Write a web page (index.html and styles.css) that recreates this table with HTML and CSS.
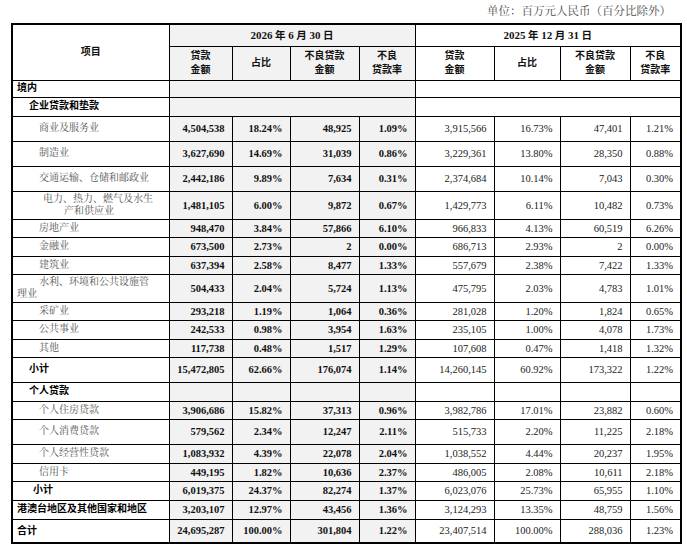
FILE: index.html
```html
<!DOCTYPE html>
<html lang="zh-CN">
<head>
<meta charset="utf-8">
<title>贷款结构</title>
<link rel="stylesheet" href="styles.css">
</head>
<body>
<div class="page">
  <div class="unit">单位：百万元人民币（百分比除外）</div>
  <table class="loans">
    <colgroup>
      <col class="c-item"><col class="c-a"><col class="c-b"><col class="c-c"><col class="c-d">
      <col class="c-e"><col class="c-f"><col class="c-g"><col class="c-h">
    </colgroup>
    <thead>
      <tr class="r-date">
        <th class="hd-item" rowspan="2">项目</th>
        <th class="hd-date cur" colspan="4"><span class="num">2026</span> 年 <span class="num">6</span> 月 <span class="num">30</span> 日</th>
        <th class="hd-date" colspan="4"><span class="num">2025</span> 年 <span class="num">12</span> 月 <span class="num">31</span> 日</th>
      </tr>
      <tr class="r-sub">
        <th class="cur">贷款<br>金额</th>
        <th class="cur">占比</th>
        <th class="cur">不良贷款<br>金额</th>
        <th class="cur">不良<br>贷款率</th>
        <th>贷款<br>金额</th>
        <th>占比</th>
        <th>不良贷款<br>金额</th>
        <th>不良<br>贷款率</th>
      </tr>
    </thead>
    <tbody>
      <tr class="r17"><td class="lab b lv0">境内</td><td class="cur" colspan="4"></td><td colspan="4"></td></tr>
      <tr class="r19"><td class="lab b lv1">企业贷款和垫款</td><td class="cur" colspan="4"></td><td colspan="4"></td></tr>
      <tr class="r25"><td class="lab lv2">商业及服务业</td><td class="n cur">4,504,538</td><td class="n cur">18.24%</td><td class="n cur">48,925</td><td class="n cur">1.09%</td><td class="n">3,915,566</td><td class="n">16.73%</td><td class="n">47,401</td><td class="n">1.21%</td></tr>
      <tr class="r25"><td class="lab lv2">制造业</td><td class="n cur">3,627,690</td><td class="n cur">14.69%</td><td class="n cur">31,039</td><td class="n cur">0.86%</td><td class="n">3,229,361</td><td class="n">13.80%</td><td class="n">28,350</td><td class="n">0.88%</td></tr>
      <tr class="r25"><td class="lab lv2">交通运输、仓储和邮政业</td><td class="n cur">2,442,186</td><td class="n cur">9.89%</td><td class="n cur">7,634</td><td class="n cur">0.31%</td><td class="n">2,374,684</td><td class="n">10.14%</td><td class="n">7,043</td><td class="n">0.30%</td></tr>
      <tr class="r28"><td class="lab two"><span class="ln ind-a">电力、热力、燃气及水生</span><span class="ln ind-b">产和供应业</span></td><td class="n cur">1,481,105</td><td class="n cur">6.00%</td><td class="n cur">9,872</td><td class="n cur">0.67%</td><td class="n">1,429,773</td><td class="n">6.11%</td><td class="n">10,482</td><td class="n">0.73%</td></tr>
      <tr class="r18"><td class="lab lv2">房地产业</td><td class="n cur">948,470</td><td class="n cur">3.84%</td><td class="n cur">57,866</td><td class="n cur">6.10%</td><td class="n">966,833</td><td class="n">4.13%</td><td class="n">60,519</td><td class="n">6.26%</td></tr>
      <tr class="r19"><td class="lab lv2">金融业</td><td class="n cur">673,500</td><td class="n cur">2.73%</td><td class="n cur">2</td><td class="n cur">0.00%</td><td class="n">686,713</td><td class="n">2.93%</td><td class="n">2</td><td class="n">0.00%</td></tr>
      <tr class="r18"><td class="lab lv2">建筑业</td><td class="n cur">637,394</td><td class="n cur">2.58%</td><td class="n cur">8,477</td><td class="n cur">1.33%</td><td class="n">557,679</td><td class="n">2.38%</td><td class="n">7,422</td><td class="n">1.33%</td></tr>
      <tr class="r28"><td class="lab two"><span class="ln ind-c">水利、环境和公共设施管</span><span class="ln ind-d">理业</span></td><td class="n cur">504,433</td><td class="n cur">2.04%</td><td class="n cur">5,724</td><td class="n cur">1.13%</td><td class="n">475,795</td><td class="n">2.03%</td><td class="n">4,783</td><td class="n">1.01%</td></tr>
      <tr class="r18"><td class="lab lv2">采矿业</td><td class="n cur">293,218</td><td class="n cur">1.19%</td><td class="n cur">1,064</td><td class="n cur">0.36%</td><td class="n">281,028</td><td class="n">1.20%</td><td class="n">1,824</td><td class="n">0.65%</td></tr>
      <tr class="r19"><td class="lab lv2">公共事业</td><td class="n cur">242,533</td><td class="n cur">0.98%</td><td class="n cur">3,954</td><td class="n cur">1.63%</td><td class="n">235,105</td><td class="n">1.00%</td><td class="n">4,078</td><td class="n">1.73%</td></tr>
      <tr class="r18"><td class="lab lv2">其他</td><td class="n cur">117,738</td><td class="n cur">0.48%</td><td class="n cur">1,517</td><td class="n cur">1.29%</td><td class="n">107,608</td><td class="n">0.47%</td><td class="n">1,418</td><td class="n">1.32%</td></tr>
      <tr class="r25"><td class="lab b lv1">小计</td><td class="n cur">15,472,805</td><td class="n cur">62.66%</td><td class="n cur">176,074</td><td class="n cur">1.14%</td><td class="n">14,260,145</td><td class="n">60.92%</td><td class="n">173,322</td><td class="n">1.22%</td></tr>
      <tr class="r19"><td class="lab b lv1">个人贷款</td><td class="cur"></td><td class="cur"></td><td class="cur"></td><td class="cur"></td><td></td><td></td><td></td><td></td></tr>
      <tr class="r18"><td class="lab lv2">个人住房贷款</td><td class="n cur">3,906,686</td><td class="n cur">15.82%</td><td class="n cur">37,313</td><td class="n cur">0.96%</td><td class="n">3,982,786</td><td class="n">17.01%</td><td class="n">23,882</td><td class="n">0.60%</td></tr>
      <tr class="r25"><td class="lab lv2">个人消费贷款</td><td class="n cur">579,562</td><td class="n cur">2.34%</td><td class="n cur">12,247</td><td class="n cur">2.11%</td><td class="n">515,733</td><td class="n">2.20%</td><td class="n">11,225</td><td class="n">2.18%</td></tr>
      <tr class="r19"><td class="lab lv2">个人经营性贷款</td><td class="n cur">1,083,932</td><td class="n cur">4.39%</td><td class="n cur">22,078</td><td class="n cur">2.04%</td><td class="n">1,038,552</td><td class="n">4.44%</td><td class="n">20,237</td><td class="n">1.95%</td></tr>
      <tr class="r18"><td class="lab lv2">信用卡</td><td class="n cur">449,195</td><td class="n cur">1.82%</td><td class="n cur">10,636</td><td class="n cur">2.37%</td><td class="n">486,005</td><td class="n">2.08%</td><td class="n">10,611</td><td class="n">2.18%</td></tr>
      <tr class="r19"><td class="lab b lv1b">小计</td><td class="n cur">6,019,375</td><td class="n cur">24.37%</td><td class="n cur">82,274</td><td class="n cur">1.37%</td><td class="n">6,023,076</td><td class="n">25.73%</td><td class="n">65,955</td><td class="n">1.10%</td></tr>
      <tr class="r19"><td class="lab b lv0">港澳台地区及其他国家和地区</td><td class="n cur">3,203,107</td><td class="n cur">12.97%</td><td class="n cur">43,456</td><td class="n cur">1.36%</td><td class="n">3,124,293</td><td class="n">13.35%</td><td class="n">48,759</td><td class="n">1.56%</td></tr>
      <tr class="r24"><td class="lab b lv0">合计</td><td class="n cur">24,695,287</td><td class="n cur">100.00%</td><td class="n cur">301,804</td><td class="n cur">1.22%</td><td class="n">23,407,514</td><td class="n">100.00%</td><td class="n">288,036</td><td class="n">1.23%</td></tr>
    </tbody>
  </table>
</div>
</body>
</html>
```
FILE: styles.css
```css
html, body {
  margin: 0;
  padding: 0;
  background: #ffffff;
}

body {
  font-family: "Liberation Serif", "Noto Serif CJK SC", "Noto Sans CJK SC", serif;
  color: #111;
}

.page {
  padding: 0 0 0 11px;
  width: 671px;
}

.unit {
  height: 23px;
  line-height: 23px;
  text-align: right;
  padding-right: 11px;
  font-size: 11.5px;
  color: #4a4a4a;
}

.loans {
  border-collapse: collapse;
  table-layout: fixed;
  width: 671px;
  border: 2px solid #000;
}

.c-item { width: 157px; }
.c-a { width: 63px; }
.c-b { width: 58px; }
.c-c { width: 69px; }
.c-d { width: 56px; }
.c-e { width: 79px; }
.c-f { width: 66px; }
.c-g { width: 70px; }
.c-h { width: 51px; }

.loans th,
.loans td {
  border: 1px solid #000;
  padding: 0;
  vertical-align: middle;
  overflow: hidden;
  white-space: nowrap;
}

.loans th {
  font-family: "Liberation Serif", "Noto Sans CJK SC", sans-serif;
  font-weight: bold;
  font-size: 10px;
  line-height: 14px;
  text-align: center;
  color: #111;
}

.loans .hd-date {
  font-size: 10.5px;
}

.num {
  font-family: "Liberation Serif", serif;
  font-weight: bold;
  font-size: 11px;
}

.loans .cur {
  background: #f2f2f2;
}

.r-date { height: 22px; }
.r-sub { height: 34px; }
.r17 { height: 17px; }
.r18 { height: 18px; }
.r19 { height: 19px; }
.r24 { height: 24px; }
.r25 { height: 25px; }
.r28 { height: 28px; }

.loans .lab {
  font-size: 10px;
  line-height: 12.5px;
  color: #555;
  text-align: left;
}

.loans .lab.b {
  font-family: "Liberation Serif", "Noto Sans CJK SC", sans-serif;
  font-weight: bold;
  color: #000;
}

.loans .lv0 { padding-left: 4px; }
.loans .lv1 { padding-left: 16px; }
.loans .lv1b { padding-left: 20px; }
.loans .lv2 { padding-left: 26px; }

.ln { display: block; }
.ind-a { padding-left: 30px; }
.ind-b { padding-left: 51px; }
.ind-c { padding-left: 26px; }
.ind-d { padding-left: 4px; }

.loans .n {
  font-family: "Liberation Serif", serif;
  font-size: 10.5px;
  text-align: right;
  padding-right: 7px;
  color: #222;
}

.loans .n.cur {
  font-weight: bold;
  color: #111;
}
```
